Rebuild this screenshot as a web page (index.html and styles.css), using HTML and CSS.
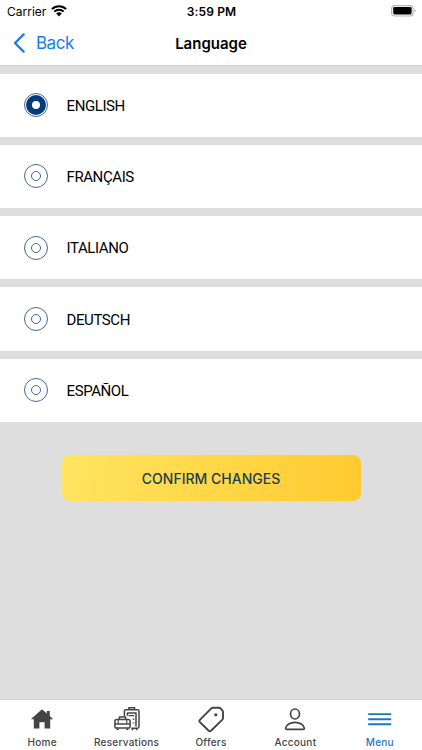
FILE: index.html
```html
<!DOCTYPE html>
<html lang="en">
<head>
    <meta charset="UTF-8">
    <meta name="viewport" content="width=device-width, initial-scale=1.0">
    <title>Language</title>
    <link rel="stylesheet" href="styles.css">
</head>
<body>
    <div class="status-bar">
        <div class="carrier">
            <span>Carrier</span>
            <svg width="16" height="12" viewBox="0 0 16 12">
                <path d="M.9 4.1a10.2 10.2 0 0 1 14.2 0M3.3 6.6a6.8 6.8 0 0 1 9.4 0" fill="none" stroke="#000" stroke-width="2"/>
                <path d="M8 11.4 5.2 8.6a4 4 0 0 1 5.6 0z"/>
            </svg>
        </div>
        <span class="clock">3:59 PM</span>
        <svg class="battery" width="26" height="12" viewBox="0 0 26 12">
            <rect x="1.6" y=".6" width="21.4" height="10.4" rx="3" fill="#fff" stroke="#b4b4b4" stroke-width="1.2"/>
            <rect x="3.2" y="2.1" width="18.4" height="7.4" rx="1.4"/>
            <path d="M24.6 4v3.6q1-.5 1-1.8t-1-1.8z" fill="#999"/>
        </svg>
    </div>

    <header class="nav-bar">
        <a class="back" href="#">
            <svg width="12" height="20" viewBox="0 0 12 20">
                <path d="M10.6 1.4 2 10l8.6 8.6" fill="none" stroke="currentColor" stroke-width="2.3" stroke-linecap="round" stroke-linejoin="round"/>
            </svg>
            <span>Back</span>
        </a>
        <h1>Language</h1>
    </header>

    <main>
        <form class="languages">
            <label class="language"><input type="radio" name="lang" checked><span class="radio"></span><span class="name">ENGLISH</span></label>
            <label class="language"><input type="radio" name="lang"><span class="radio"></span><span class="name">FRANÇAIS</span></label>
            <label class="language"><input type="radio" name="lang"><span class="radio"></span><span class="name">ITALIANO</span></label>
            <label class="language"><input type="radio" name="lang"><span class="radio"></span><span class="name">DEUTSCH</span></label>
            <label class="language"><input type="radio" name="lang"><span class="radio"></span><span class="name">ESPAÑOL</span></label>
        </form>
        <button class="confirm" type="button">CONFIRM CHANGES</button>
    </main>

    <nav class="tab-bar">
        <a class="tab" href="#">
            <svg width="28" height="28" viewBox="0 0 28 28">
                <path d="M14 4.2 2.8 14.2h3v9.2h5.6v-6.2h5.2v6.2h5.6v-9.2h3l-3.4-3.1V6h-3v2.4z" fill="#444446"/>
            </svg>
            <span>Home</span>
        </a>
        <a class="tab" href="#">
            <svg width="28" height="28" viewBox="0 0 28 28" fill="none" stroke="#444446" stroke-width="1.5" stroke-linejoin="round">
                <path d="M11.4 11.4V6.2q0-1.4 1.4-1.4h11.6q1.6 0 1.6 1.6v15.2q0 1.6-1.6 1.6h-6"/>
                <path d="M15.8 4.6V2.8h5.8v1.8M14.4 10.8V8h8.6v13.4"/>
                <path d="M15.6 10.6h5.6M19.6 14.2h1.8M19.6 18h1.8" stroke-width="1.2"/>
                <rect x="1.9" y="14.4" width="15.2" height="8.6" rx="1.8"/>
                <path d="M6.4 14.2v-2.1h6.2v2.1M2 18.9h15"/>
                <path d="M5.2 15v3.6M13.8 15v3.6" stroke-width="1.1"/>
                <path d="M3.6 24.2h2.2M13.2 24.2h2.2M18.6 24.4h1.8M22.8 24.4h1.6" stroke-width="1.6"/>
            </svg>
            <span>Reservations</span>
        </a>
        <a class="tab" href="#">
            <svg width="28" height="28" viewBox="0 0 28 28">
                <path d="M15.8 2.8h6.4q.8 0 1.3.6l2 2.3q.5.6.5 1.4v6.2q0 .8-.6 1.4L14 25.8q-1.2 1-2.3 0l-8.8-8.7q-1.1-1.2 0-2.3L14.3 3.4q.6-.6 1.5-.6z" fill="none" stroke="#444446" stroke-width="1.9"/>
                <circle cx="18.8" cy="9.8" r="1.6" fill="#444446"/>
            </svg>
            <span>Offers</span>
        </a>
        <a class="tab" href="#">
            <svg width="28" height="28" viewBox="0 0 28 28" fill="none" stroke="#444446" stroke-width="1.7">
                <ellipse cx="14" cy="9" rx="4.5" ry="5"/>
                <path d="M5.8 24.3q-1.3 0-1.1-1.2c.5-3.3 4.4-5.8 9.3-5.8s8.8 2.5 9.3 5.8q.2 1.2-1.1 1.2z"/>
            </svg>
            <span>Account</span>
        </a>
        <a class="tab active" href="#">
            <svg width="28" height="28" viewBox="0 0 28 28">
                <path d="M2.2 9.1h23M2.2 14.2h23M2.2 19.3h23" stroke="currentColor" stroke-width="1.9"/>
            </svg>
            <span>Menu</span>
        </a>
    </nav>
</body>
</html>
```

FILE: styles.css
```css
*,
*::before {
    box-sizing: border-box;
}
body {
    margin: 0;
    height: 750px;
    display: flex;
    flex-direction: column;
    background-color: #fff;
    color: #000;
    font-family: Inter, "Liberation Sans", sans-serif;
}
a {
    color: inherit;
    text-decoration: none;
}
svg {
    display: block;
}
.status-bar {
    height: 22px;
    padding: 0 6px 0 7px;
    display: grid;
    grid-template-columns: 1fr auto 1fr;
    align-items: center;
    font-size: 12px;
}
.carrier {
    display: flex;
    align-items: center;
    gap: 5px;
}
.clock {
    font-weight: 600;
    letter-spacing: 0.15px;
}
.battery {
    justify-self: end;
}
.nav-bar {
    height: 43.5px;
    padding: 0 13px;
    display: grid;
    grid-template-columns: 1fr auto 1fr;
    align-items: center;
    border-bottom: 1px solid #d0d0d0;
}
.back {
    display: flex;
    align-items: center;
    gap: 11px;
    color: #1a7cf0;
    font-size: 17px;
    letter-spacing: -0.5px;
}
.nav-bar h1 {
    margin: 0;
    font-size: 15px;
    font-weight: 600;
}
main {
    flex: 1;
    padding-top: 8px;
    background-color: #dedede;
}
.languages {
    display: flex;
    flex-direction: column;
    gap: 8px;
}
.language {
    height: 63.3px;
    padding-left: 24px;
    display: flex;
    align-items: center;
    gap: 18.5px;
    background-color: #fff;
    font-family: Roboto, sans-serif;
    font-size: 15px;
    line-height: 19px;
    letter-spacing: -0.4px;
}
.language input {
    display: none;
}
.name {
    padding-top: 2px;
}
.radio {
    width: 24px;
    height: 24px;
    display: flex;
    align-items: center;
    justify-content: center;
    border: 1px solid #40699c;
    border-radius: 50%;
}
.radio::before {
    content: "";
    width: 10px;
    height: 10px;
    border: 1px solid #40699c;
    border-radius: 50%;
}
input:checked + .radio::before {
    width: 20px;
    height: 20px;
    border: 6px solid #043b7c;
}
.confirm {
    display: block;
    width: 299px;
    height: 45.5px;
    margin: 33.5px auto 0;
    padding: 0;
    border: none;
    border-radius: 8px;
    background: linear-gradient(105deg, #ffe561, #ffca30);
    color: #173f56;
    font-family: inherit;
    font-size: 14px;
    font-weight: 500;
}
.tab-bar {
    height: 51px;
    display: grid;
    grid-template-columns: repeat(5, 1fr);
    border-top: 1px solid #d0d0d0;
}
.tab {
    padding-top: 5px;
    display: flex;
    flex-direction: column;
    align-items: center;
    gap: 3px;
    color: #444446;
    font-size: 10px;
    font-weight: 500;
    line-height: 13px;
    letter-spacing: 0.25px;
}
.tab.active {
    color: #1c78bd;
}
```
